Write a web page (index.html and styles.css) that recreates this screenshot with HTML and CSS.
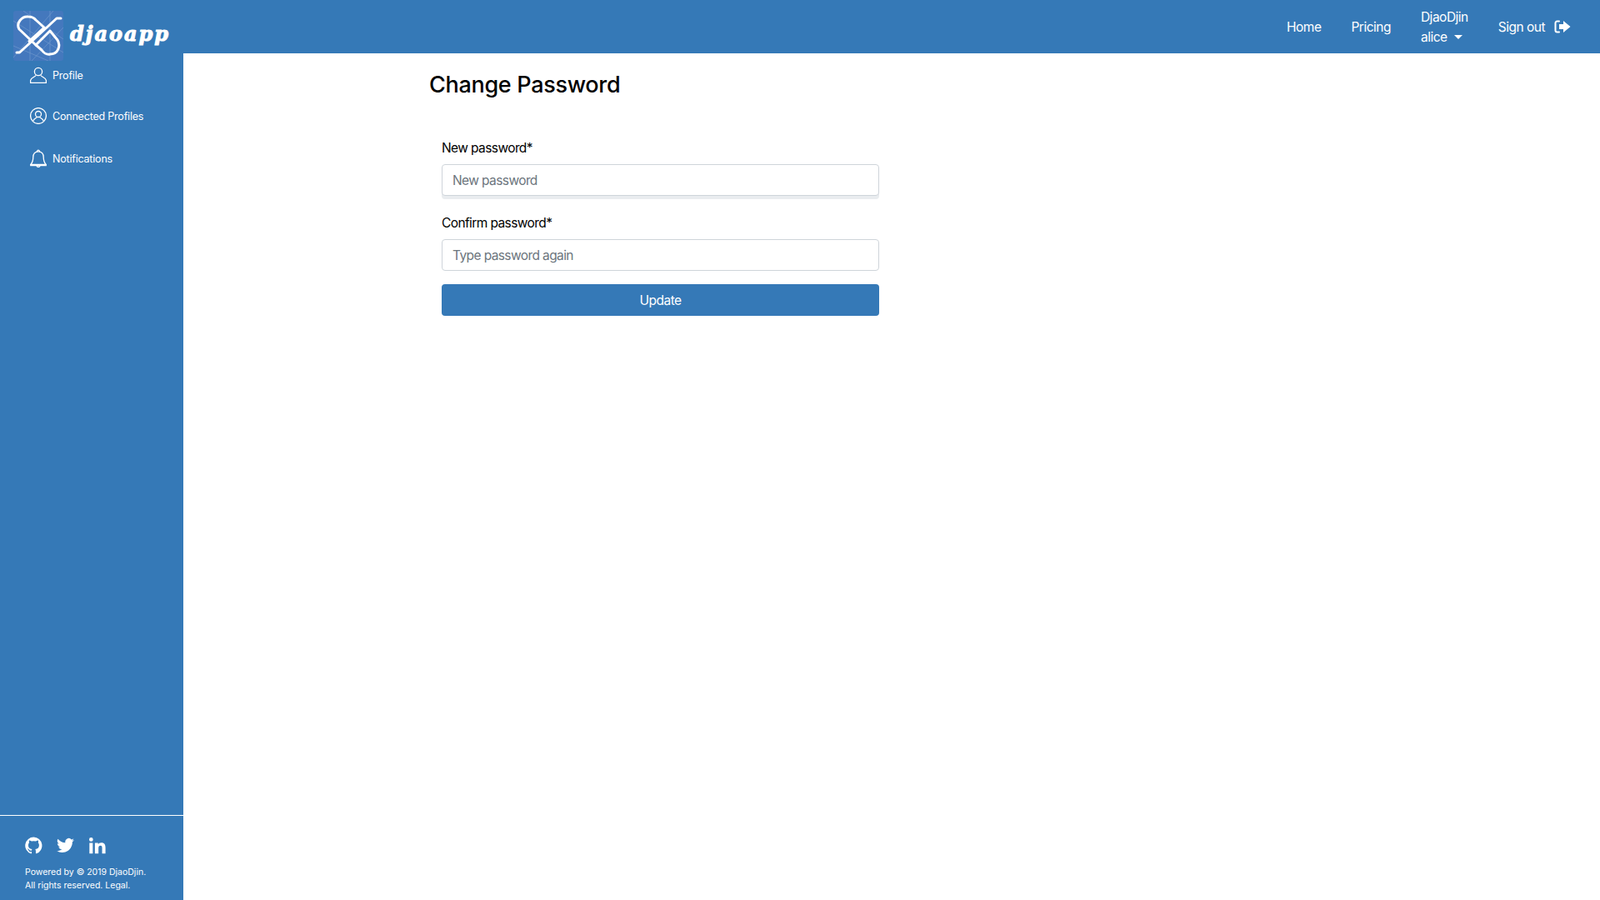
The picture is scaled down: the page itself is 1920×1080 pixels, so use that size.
FILE: index.html
```html
<!DOCTYPE html>
<html lang="en">
<head>
    <meta charset="UTF-8">
    <meta name="viewport" content="width=device-width, initial-scale=1.0">
    <title>Change Password</title>
    <link rel="stylesheet" href="styles.css">
</head>
<body>
    <header class="topbar">
        <a class="brand" href="#">
            <svg class="brand-logo" viewBox="0 0 60 60">
                <rect width="60" height="60" rx="3" fill="#4478bd"/>
                <g stroke="#6d97cd" stroke-width="1" fill="none" opacity="0.7">
                    <path d="M0 12L60 50M0 42L42 60M12 0L60 34M48 0L0 56M60 20L22 60M20 0L20 60M44 0L44 60"/>
                </g>
                <g stroke="#fff" stroke-width="3" fill="none" stroke-linecap="round" stroke-linejoin="round">
                    <path d="M4 50H7.500L52 9H57"/>
                    <path d="M19 36.500L37 20L27 11C25 8.500 22 7 18 7C10 6 3 15 7 22L27 41"/>
                    <path d="M27 41L34 47C36 50 40 53 44 52C54 52 57 42 53 35L44 24Z"/>
                </g>
            </svg>
            <span class="brand-name">djaoapp</span>
        </a>
        <nav class="topnav">
            <a href="#">Home</a>
            <a href="#">Pricing</a>
            <a class="account" href="#">DjaoDjin<br>alice <span class="caret"></span></a>
            <a class="signout" href="#">Sign out
                <svg class="signout-icon" viewBox="0 0 20 16">
                    <path d="M6 1.500H3.500A2 2 0 0 0 1.500 3.500V12.500A2 2 0 0 0 3.500 14.500H6" fill="none" stroke="#fff" stroke-width="2" stroke-linecap="round"/>
                    <path d="M6 5H11V1L19.500 8L11 15V11H6Z" fill="#fff"/>
                </svg>
            </a>
        </nav>
    </header>
    <div class="layout">
        <aside class="sidebar">
            <ul class="sidemenu">
                <li class="item-profile">
                    <svg class="side-icon" viewBox="0 0 20 20" fill="none" stroke="#fff" stroke-width="1.300">
                        <circle cx="10" cy="6" r="4.600"/>
                        <path d="M7 10.500C6 12.500 1 13 .6 16.500V19.400H19.400V16.500C19 13 14 12.500 13 10.500"/>
                    </svg>
                    Profile
                </li>
                <li class="item-connected">
                    <svg class="side-icon" viewBox="0 0 20 20" fill="none" stroke="#fff" stroke-width="1.300">
                        <circle cx="10" cy="10" r="9.400"/>
                        <circle cx="10" cy="8" r="3.500"/>
                        <path d="M3.800 16C5 13 8 12.500 8.500 11.500M16.200 16C15 13 12 12.500 11.500 11.500"/>
                    </svg>
                    Connected Profiles
                </li>
                <li class="item-notifications">
                    <svg class="side-icon bell" viewBox="0 0 20 22" fill="none" stroke="#fff" stroke-width="1.300">
                        <path d="M8.500 3C8.500 .5 11.500 .5 11.500 3"/>
                        <path d="M10 2.800C6 2.800 3.800 5.500 3.800 9.500C3.800 14 3 16 .8 18.500H19.200C17 16 16.200 14 16.200 9.500C16.200 5.500 14 2.800 10 2.800Z"/>
                        <path d="M.8 18.500V19.500H19.200V18.500M8 19.500C8 22 12 22 12 19.500"/>
                    </svg>
                    Notifications
                </li>
            </ul>
            <footer class="side-footer">
                <div class="social">
                    <svg class="social-icon" viewBox="0 0 24 24"><path fill="#fff" d="M12 .5a11.700 11.700 0 0 0-3.700 22.800c.6.100.8-.3.800-.6v-2.100c-3.300.7-4-1.500-4-1.500-.5-1.400-1.300-1.800-1.300-1.800-1.100-.7.100-.7.100-.7 1.200.1 1.800 1.200 1.800 1.200 1 1.800 2.800 1.300 3.400 1 .1-.8.400-1.300.7-1.600-2.600-.3-5.300-1.300-5.300-5.800 0-1.300.5-2.300 1.200-3.100-.1-.3-.5-1.500.1-3.100 0 0 1-.3 3.200 1.200a11 11 0 0 1 5.800 0c2.200-1.500 3.200-1.200 3.200-1.200.6 1.600.2 2.800.1 3.100.8.800 1.200 1.900 1.200 3.100 0 4.500-2.700 5.500-5.300 5.800.4.400.8 1.100.8 2.200v3.200c0 .3.200.7.800.6A11.700 11.700 0 0 0 12 .5z"/></svg>
                    <svg class="social-icon" viewBox="0 0 24 24"><path fill="#fff" d="M24 4.600c-.9.400-1.800.7-2.800.8 1-.6 1.800-1.600 2.200-2.700-1 .6-2 1-3.100 1.200a4.900 4.900 0 0 0-8.400 4.500C7.800 8.200 4.200 6.200 1.700 3.200A4.900 4.900 0 0 0 3.200 9.700c-.8 0-1.600-.2-2.200-.6v.1c0 2.400 1.700 4.400 3.900 4.800-.7.200-1.500.2-2.200.1.600 2 2.400 3.400 4.600 3.400A9.900 9.900 0 0 1 0 19.500a13.900 13.900 0 0 0 7.500 2.200c9.100 0 14.300-7.700 14-14.600 1-.7 1.800-1.500 2.500-2.500z"/></svg>
                    <svg class="social-icon" viewBox="0 0 24 24"><path fill="#fff" d="M1.500 8.500h4.600V23H1.500zM3.800 1.200a2.700 2.700 0 1 1 0 5.400 2.700 2.700 0 0 1 0-5.400zM9 8.500h4.400v2c.6-1.200 2.100-2.300 4.400-2.300 4.700 0 5.700 3 5.700 7V23h-4.600v-6.900c0-1.700 0-3.800-2.300-3.800s-2.700 1.800-2.700 3.700v7H9z"/></svg>
                </div>
                <p class="legal">Powered by © 2019 DjaoDjin.<br>All rights reserved. Legal.</p>
            </footer>
        </aside>
        <main class="content">
            <h1>Change Password</h1>
            <form class="password-form">
                <div class="field field-active">
                    <label for="new_password">New password*</label>
                    <input type="password" id="new_password" placeholder="New password">
                </div>
                <div class="field">
                    <label for="new_password2">Confirm password*</label>
                    <input type="password" id="new_password2" placeholder="Type password again">
                </div>
                <button type="submit">Update</button>
            </form>
        </main>
    </div>
</body>
</html>
```

FILE: styles.css
```css
* {
    box-sizing: border-box;
}
body {
    margin: 0;
    height: 1080px;
    overflow: hidden;
    font-family: Inter, "Liberation Sans", sans-serif;
    color: #000;
    background-color: #fff;
    display: flex;
    flex-direction: column;
}
a {
    color: #fff;
    text-decoration: none;
}
.topbar {
    flex: none;
    height: 64px;
    background-color: #3579b7;
    display: flex;
    justify-content: space-between;
    align-items: flex-start;
    padding: 0 35px 0 16px;
}
.brand {
    display: flex;
    align-items: center;
    margin-top: 13px;
    position: relative;
    z-index: 1;
}
.brand-logo {
    width: 60px;
    height: 60px;
}
.brand-name {
    font-family: "DejaVu Serif", serif;
    font-style: italic;
    font-weight: 700;
    font-size: 24px;
    margin-left: 8px;
    margin-top: -6px;
    letter-spacing: 2px;
    -webkit-text-stroke: 1px #fff;
}
.topnav {
    display: flex;
    align-items: center;
    height: 64px;
    gap: 36px;
    font-size: 15.500px;
    letter-spacing: -0.5px;
}
.account {
    line-height: 24px;
    white-space: nowrap;
    padding-top: 1px;
}
.caret {
    display: inline-block;
    margin-left: 5px;
    vertical-align: 3px;
    border-top: 5px solid #fff;
    border-left: 5px solid transparent;
    border-right: 5px solid transparent;
}
.signout {
    display: flex;
    align-items: center;
    gap: 11px;
}
.signout-icon {
    width: 20px;
    height: 16px;
}
.layout {
    flex: 1;
    display: flex;
    min-height: 0;
}
.sidebar {
    flex: none;
    width: 220px;
    background-color: #3579b7;
    color: #fff;
    display: flex;
    flex-direction: column;
    justify-content: space-between;
}
.sidemenu {
    list-style: none;
    margin: 0;
    padding: 16px 0 0 36px;
    font-size: 12.500px;
    letter-spacing: -0.2px;
}
.sidemenu li {
    display: flex;
    align-items: center;
    gap: 7px;
    height: 20px;
}
.item-connected {
    margin-top: 29px;
}
.item-notifications {
    margin-top: 31px;
}
.side-icon {
    flex: none;
    width: 20px;
    height: 20px;
}
.side-icon.bell {
    height: 22px;
}
.side-footer {
    border-top: 1px solid #fff;
    height: 102px;
    padding: 25px 0 0 30px;
}
.social {
    display: flex;
    gap: 17px;
}
.social-icon {
    width: 21px;
    height: 21px;
}
.legal {
    margin: 14px 0 0;
    font-size: 10.500px;
    line-height: 16px;
}
.content {
    flex: 1;
    padding: 21px 0 0 295px;
}
h1 {
    margin: 0;
    font-size: 27px;
    font-weight: 500;
    line-height: 34px;
    letter-spacing: -0.3px;
}
.password-form {
    width: 525px;
    margin: 47px 0 0 15px;
}
.field {
    margin-bottom: 16px;
}
.field-active {
    margin-bottom: 21px;
}
.field label {
    display: block;
    font-size: 15.500px;
    line-height: 24px;
    letter-spacing: -0.6px;
    margin-bottom: 7px;
}
.field input {
    display: block;
    width: 100%;
    height: 38px;
    padding: 6px 12px;
    font-family: inherit;
    font-size: 15.500px;
    letter-spacing: -0.6px;
    border: 1px solid #ced4da;
    border-radius: 4px;
    background-color: #fff;
}
.field input::placeholder {
    color: #6c757d;
}
.field-active input {
    box-shadow: 0 4px 0 #e9ecef;
}
button {
    display: block;
    width: 100%;
    height: 38px;
    font-family: inherit;
    font-size: 15.500px;
    letter-spacing: -0.5px;
    color: #fff;
    background-color: #3579b7;
    border: none;
    border-radius: 4px;
}
```
